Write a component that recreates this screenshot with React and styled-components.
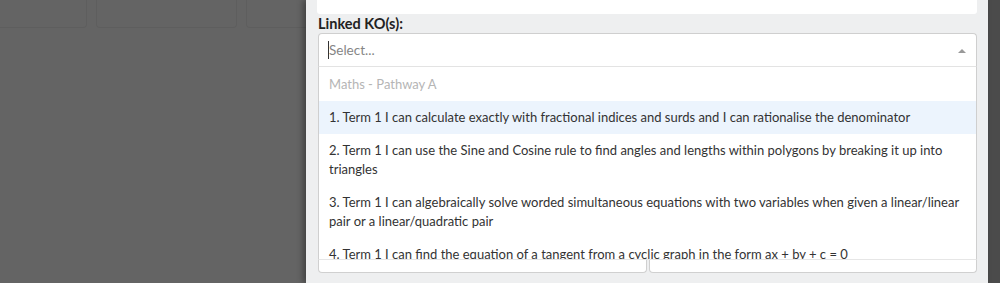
import React from 'react';
import styled, { createGlobalStyle } from 'styled-components';

const GlobalStyle = createGlobalStyle`
  html, body {
    margin: 0;
    padding: 0;
    background: #646464;
  }
  * {
    box-sizing: border-box;
  }
`;

const Page = styled.div`
  display: flex;
  height: 283px;
  width: 1000px;
  overflow: hidden;
  font-family: Lato, 'Open Sans', sans-serif;
  font-size: 13px;
  color: #333;
`;

const Backdrop = styled.div`
  width: 306px;
  flex-shrink: 0;
  background: #646464;
`;

const CardRow = styled.div`
  display: flex;
  gap: 9px;
  margin-left: -20px;
`;

const GhostCard = styled.div`
  width: ${(p) => p.$w}px;
  height: 28px;
  flex-shrink: 0;
  border: 1px solid rgba(0, 0, 0, 0.06);
  border-top: none;
  border-radius: 0 0 4px 4px;
`;

const Panel = styled.div`
  flex: 1;
  background: #eeeff0;
  padding: 0 11px 0 12px;
  box-shadow: -3px 0 6px rgba(0, 0, 0, 0.35);
  position: relative;
`;

const Strip = styled.div`
  width: 12px;
  flex-shrink: 0;
  background: #4b4b4b;
`;

const TopBox = styled.div`
  height: 14px;
  background: #fff;
  margin-left: -1px;
  border-radius: 0 0 3px 3px;
`;

const Label = styled.div`
  font-weight: 700;
  font-size: 14.5px;
  line-height: 19px;
  color: #222;
`;

const Control = styled.div`
  height: 34px;
  display: flex;
  align-items: center;
  justify-content: space-between;
  background: #fff;
  border: 1px solid #cfcfcf;
  border-bottom-color: #e3e3e3;
  border-radius: 4px 4px 0 0;
  padding: 0 10px 0 9px;
`;

const Placeholder = styled.span`
  color: #858585;
  font-size: 13.5px;
  border-left: 1px solid #333;
  line-height: 18px;
`;

const Caret = styled.span`
  width: 0;
  height: 0;
  border-left: 4px solid transparent;
  border-right: 4px solid transparent;
  border-bottom: 4px solid #999;
  margin-top: 1px;
`;

const Menu = styled.div`
  height: 193px;
  overflow: hidden;
  background: #fff;
  border: 1px solid #cfcfcf;
  border-top: none;
  border-bottom: 1px solid #e6e6e6;
`;

const GroupHeading = styled.div`
  padding: 8px 10px 7px;
  line-height: 19px;
  color: #b5b5b5;
`;

const Option = styled.div`
  padding: 7px 10px;
  line-height: 19px;
  color: #333;
  background: ${(p) => (p.$focused ? '#ecf4fd' : '#fff')};
`;

const FieldRow = styled.div`
  display: flex;
  gap: 2px;
`;

const FieldTail = styled.div`
  flex: 1;
  height: 13px;
  background: #fff;
  border: 1px solid #d0d0d0;
  border-top: none;
  border-radius: 0 0 4px 4px;
`;

const options = [
  '1. Term 1 I can calculate exactly with fractional indices and surds and I can rationalise the denominator',
  '2. Term 1 I can use the Sine and Cosine rule to find angles and lengths within polygons by breaking it up into triangles',
  '3. Term 1 I can algebraically solve worded simultaneous equations with two variables when given a linear/linear pair or a linear/quadratic pair',
  '4. Term 1 I can find the equation of a tangent from a cyclic graph in the form ax + by + c = 0',
];

export default function App() {
  return (
    <>
      <GlobalStyle />
      <Page>
        <Backdrop>
          <CardRow>
            <GhostCard $w={107} />
            <GhostCard $w={141} />
            <GhostCard $w={100} />
          </CardRow>
        </Backdrop>
        <Panel>
          <TopBox />
          <Label>Linked KO(s):</Label>
          <Control>
            <Placeholder>Select...</Placeholder>
            <Caret />
          </Control>
          <Menu>
            <GroupHeading>Maths - Pathway A</GroupHeading>
            {options.map((text, i) => (
              <Option key={i} $focused={i === 0}>
                {text}
              </Option>
            ))}
          </Menu>
          <FieldRow>
            <FieldTail />
            <FieldTail />
          </FieldRow>
        </Panel>
        <Strip />
      </Page>
    </>
  );
}
